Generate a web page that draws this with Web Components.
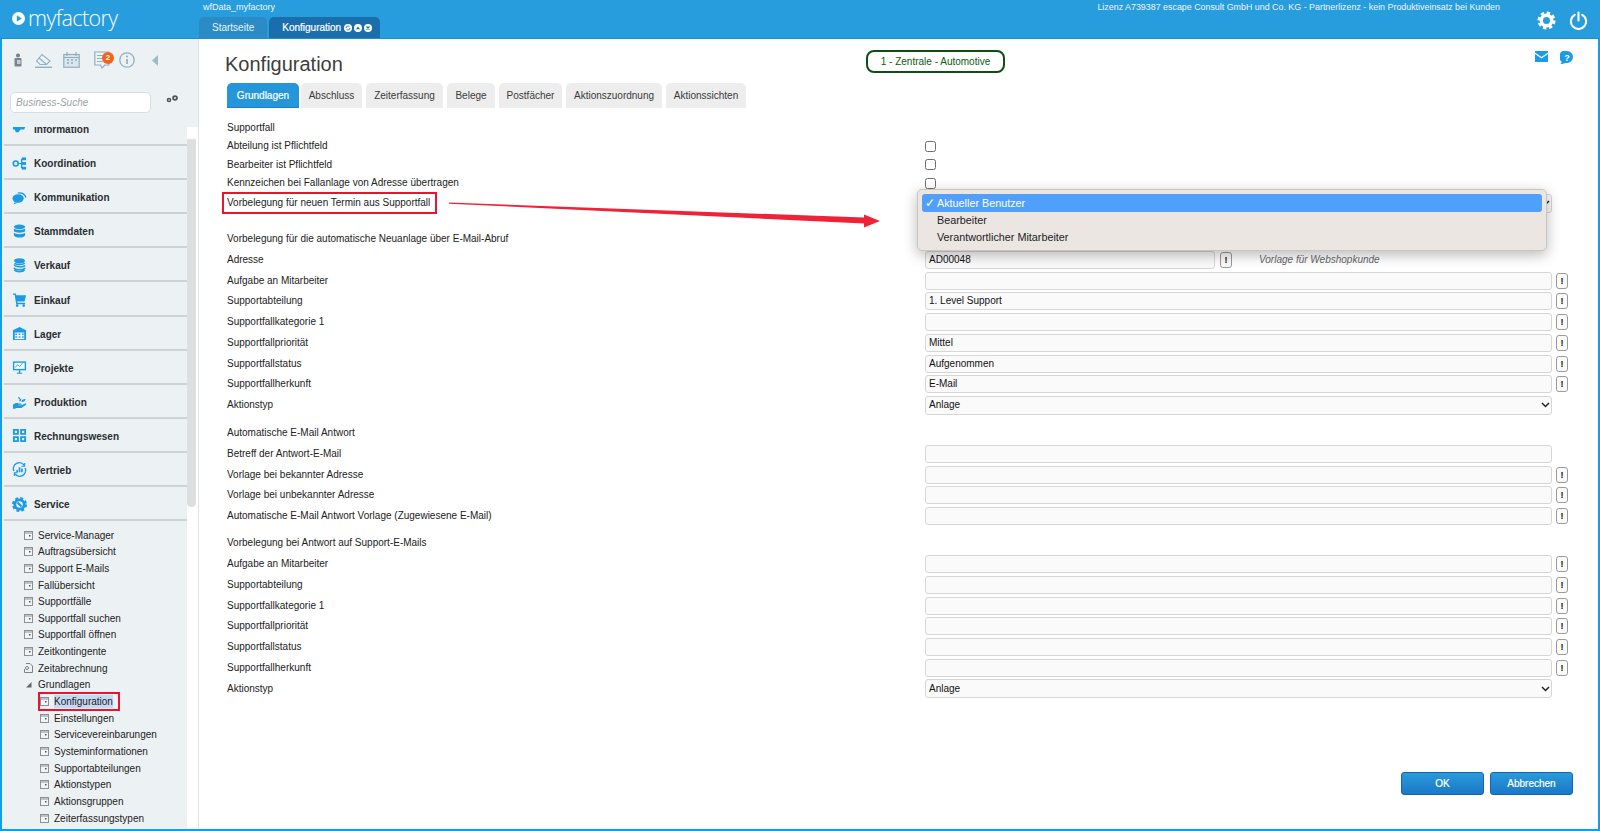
<!DOCTYPE html>
<html lang="de"><head><meta charset="utf-8"><title>myfactory</title>
<style>
html,body{margin:0;height:100%;overflow:hidden;background:#fff;font-family:"Liberation Sans",Arial,sans-serif;font-size:10px;color:#222}
</style></head><body>
<mf-app>
  <mf-topbar slot="top"></mf-topbar>
  <mf-sidebar slot="side">
    <mf-nav><svg slot="icon" viewBox="0 0 16 16"><path d="M1 3h5l2 2 2-2h5l-2 5H9l-2 3H4l-1-3H1z" fill="#1b9ae5"/></svg>Information</mf-nav>
    <mf-nav><svg slot="icon" viewBox="0 0 16 16" fill="#1b9ae5"><circle cx="4" cy="8" r="2.600" fill="none" stroke="#1b9ae5" stroke-width="1.700"/><path d="M6.500 7.400h3V3h1.500v10H9.500V8.600h-3z"/><rect x="10.500" y="1.500" width="4.500" height="3"/><rect x="10.500" y="6.500" width="4.500" height="3"/><rect x="10.500" y="11.500" width="4.500" height="3"/></svg>Koordination</mf-nav>
    <mf-nav><svg slot="icon" viewBox="0 0 16 16" fill="#1b9ae5"><ellipse cx="6.500" cy="9" rx="6" ry="4.500"/><path d="M3 13l-1.500 2.500L6 13.500z"/><path d="M6 2.800c4-1.300 8.500.5 9.500 5l-1.200.5c-1-3.500-4.500-5-8.300-4.500z"/></svg>Kommunikation</mf-nav>
    <mf-nav><svg slot="icon" viewBox="0 0 16 16" fill="#1b9ae5"><ellipse cx="8" cy="3" rx="6" ry="2.500"/><path d="M2 4.800c1.500 2 10.500 2 12 0v3c-1.500 2-10.500 2-12 0z"/><path d="M2 9.300c1.500 2 10.500 2 12 0v2.700c-1 3.300-11 3.300-12 0z"/></svg>Stammdaten</mf-nav>
    <mf-nav><svg slot="icon" viewBox="0 0 16 16" fill="none" stroke="#1b9ae5" stroke-width="1.600"><ellipse cx="8" cy="3" rx="5" ry="2" fill="#1b9ae5"/><path d="M3 5.500c1 2 9 2 10.500 0M2.500 7c0 2.500 9 3.500 11.500 1M2 10.500c1 2.500 10 3 12 0M2.500 12.500c2 2.800 9 2.800 11 0" /></svg>Verkauf</mf-nav>
    <mf-nav><svg slot="icon" viewBox="0 0 16 16" fill="#1b9ae5"><path d="M1 1.500h3l.6 2H15l-1.600 6.500H5.500l.4 1.500H14V13H4.500L2.800 3H1z"/><circle cx="5.500" cy="14.500" r="1.400"/><circle cx="12.500" cy="14.500" r="1.400"/></svg>Einkauf</mf-nav>
    <mf-nav><svg slot="icon" viewBox="0 0 16 16"><path d="M8 1L1 4.500V15h14V4.500z" fill="#1b9ae5"/><rect x="3" y="7" width="10" height="7" fill="#fff"/><g fill="#1b9ae5"><rect x="3.500" y="8" width="2" height="1.500"/><rect x="7" y="8" width="2" height="1.500"/><rect x="10.500" y="8" width="2" height="1.500"/><rect x="3.500" y="11" width="2" height="1.500"/><rect x="7" y="11" width="2" height="1.500"/><rect x="10.500" y="11" width="2" height="1.500"/></g></svg>Lager</mf-nav>
    <mf-nav><svg slot="icon" viewBox="0 0 16 16"><rect x="1" y="1.500" width="14" height="9.500" fill="#1b9ae5"/><rect x="2.500" y="3" width="11" height="6.500" fill="#fff"/><path d="M3.500 8l2.500-3 2 2 3-3.500" stroke="#1b9ae5" fill="none"/><path d="M7.200 11h1.600v2.500h2v1.200H5.200v-1.200h2z" fill="#1b9ae5"/></svg>Projekte</mf-nav>
    <mf-nav><svg slot="icon" viewBox="0 0 16 16" fill="#1b9ae5"><path d="M1 11.500c2-2 4-2.500 6-1.500h2.500c1.200 0 1.200 1.500 0 1.500H7v.5h3l4-2c1.200-.3 1.500 1 .6 1.600L10 14.800H5l-2 .8H1z"/><path d="M8 8c-.5-2 0-3 2-3.200 0 2-.5 3-2 3.200zM10 8.500c.3-2 1.500-3 4.500-3.500-.3 2.500-2 3.700-4.500 3.500zM6.500 3c1.300 0 2.200 1 2.200 2.500C7.300 5.500 6.500 4.500 6.500 3z"/></svg>Produktion</mf-nav>
    <mf-nav><svg slot="icon" viewBox="0 0 16 16"><path fill="#1b9ae5" fill-rule="evenodd" d="M1 1h6.300v6.300H1zM8.700 1H15v6.300H8.700zM1 8.700h6.300V15H1zM8.700 8.700H15V15H8.700zM3 3v2.300h2.300V3zM10.700 3v2.300H13V3zM3 10.700V13h2.300v-2.300zM10.700 10.700V13H13v-2.300z"/></svg>Rechnungswesen</mf-nav>
    <mf-nav><svg slot="icon" viewBox="0 0 16 16" fill="none" stroke="#1b9ae5" stroke-width="1.500"><path d="M2 9.500A6.300 6.300 0 0 1 13 3.500M14 6.500A6.300 6.300 0 0 1 3 12.500"/><path d="M5.500 11V8.500M8 11V5.500M10.500 11V7" stroke-width="1.800"/><path d="M13.500 1v3.500H10M2.500 15v-3.500H6" stroke-width="1.200"/></svg>Vertrieb</mf-nav>
    <mf-nav><svg slot="icon" viewBox="0 0 16 16" fill="none" stroke="#1b9ae5"><circle cx="8" cy="8" r="5" stroke-width="3"/><circle cx="8" cy="8" r="6.800" stroke-width="2.400" stroke-dasharray="3.050 2.290"/><path d="M5.800 5.800l4.400 4.400" stroke-width="2.200"/></svg>Service</mf-nav>
    <mf-tree slot="tree">
      <mf-leaf>Service-Manager</mf-leaf><mf-leaf>Auftragsübersicht</mf-leaf><mf-leaf>Support E-Mails</mf-leaf><mf-leaf>Fallübersicht</mf-leaf><mf-leaf>Supportfälle</mf-leaf><mf-leaf>Supportfall suchen</mf-leaf><mf-leaf>Supportfall öffnen</mf-leaf><mf-leaf>Zeitkontingente</mf-leaf><mf-leaf kind="doc">Zeitabrechnung</mf-leaf><mf-leaf kind="open">Grundlagen</mf-leaf>
      <mf-leaf sub marked>Konfiguration</mf-leaf><mf-leaf sub>Einstellungen</mf-leaf><mf-leaf sub>Servicevereinbarungen</mf-leaf><mf-leaf sub>Systeminformationen</mf-leaf><mf-leaf sub>Supportabteilungen</mf-leaf><mf-leaf sub>Aktionstypen</mf-leaf><mf-leaf sub>Aktionsgruppen</mf-leaf><mf-leaf sub>Zeiterfassungstypen</mf-leaf>
    </mf-tree>
  </mf-sidebar>
  <mf-main slot="main">
    <mf-titlebar>Konfiguration</mf-titlebar>
    <mf-tabs></mf-tabs>
    <mf-form>
      <mf-section style="--gap:.35px">
        <mf-row>Supportfall</mf-row>
        <mf-row check>Abteilung ist Pflichtfeld</mf-row>
        <mf-row check>Bearbeiter ist Pflichtfeld</mf-row>
        <mf-row check>Kennzeichen bei Fallanlage von Adresse übertragen</mf-row>
        <mf-row marked select popup>Vorbelegung für neuen Termin aus Supportfall</mf-row>
      </mf-section>
      <mf-section style="--mt:19.800px;--gap:2.750px">
        <mf-row>Vorbelegung für die automatische Neuanlage über E-Mail-Abruf</mf-row>
        <mf-row field short value="AD00048" btn hint="Vorlage für Webshopkunde">Adresse</mf-row>
        <mf-row field btn>Aufgabe an Mitarbeiter</mf-row>
        <mf-row field btn value="1. Level Support">Supportabteilung</mf-row>
        <mf-row field btn>Supportfallkategorie 1</mf-row>
        <mf-row field btn value="Mittel">Supportfallpriorität</mf-row>
        <mf-row field btn value="Aufgenommen">Supportfallstatus</mf-row>
        <mf-row field btn value="E-Mail">Supportfallherkunft</mf-row>
        <mf-row select value="Anlage">Aktionstyp</mf-row>
      </mf-section>
      <mf-section style="--mt:10.250px;--gap:2.600px">
        <mf-row>Automatische E-Mail Antwort</mf-row>
        <mf-row field>Betreff der Antwort-E-Mail</mf-row>
        <mf-row field btn>Vorlage bei bekannter Adresse</mf-row>
        <mf-row field btn>Vorlage bei unbekannter Adresse</mf-row>
        <mf-row field btn>Automatische E-Mail Antwort Vorlage (Zugewiesene E-Mail)</mf-row>
      </mf-section>
      <mf-section style="--mt:9.600px;--gap:2.750px">
        <mf-row>Vorbelegung bei Antwort auf Support-E-Mails</mf-row>
        <mf-row field btn>Aufgabe an Mitarbeiter</mf-row>
        <mf-row field btn>Supportabteilung</mf-row>
        <mf-row field btn>Supportfallkategorie 1</mf-row>
        <mf-row field btn>Supportfallpriorität</mf-row>
        <mf-row field btn>Supportfallstatus</mf-row>
        <mf-row field btn>Supportfallherkunft</mf-row>
        <mf-row select value="Anlage">Aktionstyp</mf-row>
      </mf-section>
    </mf-form>
    <mf-actions></mf-actions>
  </mf-main>
</mf-app>
<script>
const tpl=(css,html)=>`<style>${css}</style>${html}`;
const simple=(name,css,html)=>customElements.define(name,class extends HTMLElement{constructor(){super();this.attachShadow({mode:'open'}).innerHTML=tpl(css,html)}});

simple('mf-app',`
:host{display:flex;flex-direction:column;height:831px;width:1600px;position:relative;box-sizing:border-box;overflow:hidden}
.body{flex:1;display:flex;min-height:0;border:solid #129fe8;border-width:0 2px 2px 2px}
.arrow{position:absolute;left:0;top:0;width:1600px;height:831px;pointer-events:none}
`,`<slot name="top"></slot><div class="body"><slot name="side"></slot><slot name="main"></slot></div>
<svg class="arrow" viewBox="0 0 1600 831"><polygon points="449,202.500 864,217.500 864,214.500 880,221 864,227.500 864,223.500 449,203.700" fill="#ef2338"/></svg>`);

simple('mf-topbar',`
:host{display:flex;height:39px;box-sizing:border-box;background:#289ddd;border-bottom:1px solid #1092dc;color:#fff;font-family:"Liberation Sans",sans-serif;flex:none}
.logo{width:199px;display:flex;align-items:center;padding:0 0 2px 12px;box-sizing:border-box;gap:3px;flex:none}
.logo b{font:300 21.500px/26px "Open Sans",sans-serif;letter-spacing:-.6px}
.mid{width:600px;display:flex;flex-direction:column;padding-left:4px;box-sizing:border-box}
.app{font-size:9px;line-height:15px;height:17px;color:#eaf6fd}
.tabs{display:flex;gap:2px;margin-left:-4px}
.tab{height:21px;border-radius:5px 5px 0 0;background:#2a8bc6;display:flex;align-items:center;padding:0 13px;font-size:10px;color:#e9f5fc;box-sizing:border-box}
.tab.on{background:#1a6eab;color:#fff;-webkit-text-stroke:.2px #fff;padding:0 8px 0 13px;gap:2px}
.tab svg{width:8px;height:8px}
.right{flex:1;display:flex;flex-direction:column;align-items:flex-end}
.lic{font-size:8.900px;line-height:14px;padding-right:100px;color:#eaf6fd}
.ic{display:flex;gap:13px;padding-right:12px;align-items:center;margin-top:-3px}
.ic svg{width:19px;height:19px}
`,`<div class="logo"><svg width="13" height="13" viewBox="0 0 13 13"><circle cx="6.500" cy="6.500" r="6.500" fill="#fff"/><path d="M4.800 3.300l5 3.200-5 3.200z" fill="#289ddd"/></svg><b>myfactory</b></div>
<div class="mid"><div class="app">wfData_myfactory</div><div class="tabs"><div class="tab">Startseite</div><div class="tab on">Konfiguration
<svg viewBox="0 0 8 8" style="margin-left:1px"><circle cx="4" cy="4" r="4" fill="#fff"/><path d="M2 4a2 2 0 0 1 3.500-1.300M6 4a2 2 0 0 1-3.500 1.300" stroke="#1a6eab" fill="none"/></svg>
<svg viewBox="0 0 8 8"><circle cx="4" cy="4" r="4" fill="#fff"/><path d="M2 5.300L4 2.500l2 2.800z" fill="#1a6eab"/></svg>
<svg viewBox="0 0 8 8"><circle cx="4" cy="4" r="4" fill="#fff"/><path d="M2.500 2.500l3 3m0-3l-3 3" stroke="#1a6eab" stroke-width="1.200"/></svg></div></div></div>
<div class="right"><div class="lic">Lizenz A739387 escape Consult GmbH und Co. KG - Partnerlizenz - kein Produktiveinsatz bei Kunden</div>
<div class="ic"><svg viewBox="0 0 20 20" fill="none" stroke="#fff"><circle cx="10" cy="10" r="5.500" stroke-width="3.600"/><circle cx="10" cy="10" r="8" stroke-width="3" stroke-dasharray="3.560 2.720"/></svg>
<svg viewBox="0 0 20 20" fill="none" stroke="#fff" stroke-width="2.200" stroke-linecap="round"><path d="M10 1.500V10"/><path d="M6 4A8 8 0 1 0 14 4"/></svg></div></div>`);

customElements.define('mf-sidebar',class extends HTMLElement{constructor(){super();this.attachShadow({mode:'open'}).innerHTML=tpl(`
:host{display:flex;flex-direction:column;width:196px;flex:none;background:#ecf1f4;border-right:1px solid #dfe3e6;box-sizing:content-box;font-family:"Liberation Sans",sans-serif}
.tools{height:42px;display:flex;align-items:center;flex:none;position:relative}
.tools svg{display:block;flex:none}
.search{height:46px;flex:none;display:flex;align-items:flex-start;padding:11px 0 0 8px;gap:15px;box-sizing:border-box}
.box{width:141px;height:21px;box-sizing:border-box;border:1px solid #d8dde0;border-radius:5px;background:#fff;font:italic 10px/19px "Liberation Sans",sans-serif;color:#9a9fa3;padding-left:5px}
.search svg{margin-top:3px}
.scroll{flex:1;display:flex;min-height:0;overflow:hidden}
.list{width:185px;margin-top:-15px;flex:none}
.bar{flex:1;background:#fff;padding:3px 2px 0 0}
.thumb{height:377px;border-radius:0 0 5px 5px;background:linear-gradient(#fff 0,#fff 8px,#dcdedf 10px,#dcdedf 100%)}
.badge{position:absolute;left:100px;top:13px;width:12px;height:12px;border-radius:50%;background:#f2641c;color:#fff;font:bold 8px/12px "Liberation Sans",sans-serif;text-align:center}
`,`<div class="tools">
<svg style="margin-left:11px" width="10" height="14" viewBox="0 0 10 14"><circle cx="5" cy="2.500" r="2" fill="#6f7f88"/><rect x="1.500" y="5" width="7" height="8.500" rx="1" fill="#77868e"/><rect x="4" y="7" width="3.500" height="4" fill="#c3ced4"/></svg>
<svg style="margin-left:12px" width="17" height="16" viewBox="0 0 17 16" fill="none" stroke="#8fb0bf" stroke-width="1.100"><path d="M1.500 9L7 2.500l8 6.500-3.500 3.500H5z"/><path d="M4 6l7 6"/><path d="M0 15.300h17" stroke-width="1.400"/></svg>
<svg style="margin-left:11px" width="17" height="16" viewBox="0 0 17 16" fill="none" stroke="#8fb0bf" stroke-width="1.200"><rect x=".8" y="2.500" width="15.400" height="12.800" fill="#dbe6ec"/><path d="M4 0v4M13 0v4M.8 5.500h15.400"/><path d="M4 8h2M8 8h2M12 8h2M4 11h2M8 11h2" stroke-width="1.600" /></svg>
<svg style="margin-left:14px" width="16" height="18" viewBox="0 0 16 18" fill="none" stroke="#8fb0bf" stroke-width="1.200"><path d="M.8 1h14v13h-4L8 17l-1.500-3H.8z"/><path d="M3 4.500h9M3 7.500h9M3 10.500h6"/></svg>
<span class="badge">2</span>
<svg style="margin-left:9px" width="16" height="16" viewBox="0 0 16 16" fill="none" stroke="#8fb0bf" stroke-width="1.300"><circle cx="8" cy="8" r="7.200"/><path d="M8 7v5" stroke-width="1.700"/><circle cx="8" cy="4.500" r="1" fill="#8fb0bf" stroke="none"/></svg>
<svg style="margin-left:17px" width="6" height="11" viewBox="0 0 6 11"><path d="M6 0v11L0 5.500z" fill="#9fbac7"/></svg>
</div>
<div class="search"><div class="box">Business-Suche</div>
<svg width="12" height="8" viewBox="0 0 12 8"><circle cx="3" cy="5" r="2.300" fill="#4d5559"/><circle cx="9" cy="3" r="2.800" fill="#4d5559"/><circle cx="9" cy="3" r="1" fill="#ecf1f4"/><circle cx="3" cy="5" r=".8" fill="#ecf1f4"/></svg></div>
<div class="scroll"><div class="list"><slot></slot><slot name="tree"></slot></div><div class="bar"><div class="thumb"></div></div></div>`)}});

simple('mf-nav',`
:host{display:flex;align-items:center;height:34.100px;box-sizing:border-box;margin-left:2px;border-bottom:2px solid #cdd2d6;padding:4px 0 0 8px;gap:7px;font:bold 10px/14px "Liberation Sans",sans-serif;color:#2a2d30}
::slotted(svg){width:15px;height:15px;flex:none;margin-top:-2px}
`,`<slot name="icon"></slot><slot></slot>`);

simple('mf-tree',`:host{display:block;padding-top:5.600px}`,`<slot></slot>`);

customElements.define('mf-leaf',class extends HTMLElement{constructor(){super();const k=this.getAttribute('kind');
let ic=`<svg width="9" height="9" viewBox="0 0 9 9"><rect x=".5" y=".5" width="8" height="8" fill="#f3f4f5" stroke="#8b9094"/><path d="M.5 2h8" stroke="#8b9094"/><rect x="5" y="4" width="1.500" height="1.500" fill="#555"/></svg>`;
if(k==='doc')ic=`<svg width="9" height="10" viewBox="0 0 9 10" fill="none" stroke="#7d8387"><path d="M2 .5h4l2.500 2.500v6.500H.5V6"/><circle cx="3" cy="5" r="1.500"/></svg>`;
if(k==='open')ic=`<svg width="9" height="9" viewBox="0 0 9 9"><path d="M7.500 2v5.500H2z" fill="#666"/></svg>`;
this.attachShadow({mode:'open'}).innerHTML=tpl(`
:host{display:flex;align-items:center;height:16.670px;padding-left:22px;font:10px/13px "Liberation Sans",sans-serif;color:#222;white-space:nowrap}
:host([sub]){padding-left:38px}
.in{display:flex;align-items:center;gap:5px}
:host([marked]) .in{border:2px solid #ec1330;padding:0 3px 0 0;height:19px;box-sizing:border-box;margin-left:-2px;width:82px;flex:none}
:host([marked]) .t{background:#c4daf3}
`,`<div class="in">${ic}<span class="t"><slot></slot></span></div>`)}});

customElements.define('mf-main',class extends HTMLElement{constructor(){super();this.attachShadow({mode:'open'}).innerHTML=tpl(`
:host{flex:1;display:flex;flex-direction:column;min-width:0;padding:0 25px 34px 28px;box-sizing:border-box;background:#fff}
`,`<slot></slot>`)}});

simple('mf-titlebar',`
:host{display:flex;height:44px;align-items:flex-start;flex:none}
h1{margin:11px 0 0 -2px;width:641px;font:400 20px/28px "Liberation Sans",sans-serif;color:#3d3d3d;flex:none}
.pill{margin-top:11px;width:139px;height:23px;box-sizing:border-box;border:2px solid #0d4f12;border-radius:8px;display:flex;align-items:center;justify-content:center;font:10px/12px "Liberation Sans",sans-serif;color:#0c5a14;padding-top:1px}
.ic{margin-left:auto;display:flex;gap:12px;margin-top:12px}
`,`<h1><slot></slot></h1><div class="pill">1 - Zentrale - Automotive</div>
<div class="ic"><svg width="13" height="11" viewBox="0 0 13 11"><path d="M0 0h13v1.500L6.500 6 0 1.500z" fill="#1b9ae5"/><path d="M0 3l6.500 4.500L13 3v8H0z" fill="#1b9ae5"/></svg>
<svg width="13" height="13" viewBox="0 0 13 13"><path d="M7 0a6 6 0 0 1 0 12c-1.500 0-3 0-4.500 1L0 12.500c1.500-.3 1.500-1 1.500-2A6 6 0 0 1 7 0z" fill="#1b9ae5"/><text x="7" y="9.500" text-anchor="middle" font-size="9" font-weight="700" fill="#fff" font-family="Liberation Sans">?</text></svg></div>`);

simple('mf-tabs',`
:host{display:flex;gap:4px;height:25px;flex:none;font:10px/25px "Liberation Sans",sans-serif}
.t{background:#ededed;border-radius:5px 5px 0 0;color:#3a3a3a;box-sizing:border-box;text-align:center}
.on{background:#2596da;color:#fff;border-bottom:1px solid #1a82c4;-webkit-text-stroke:.2px #fff;width:72px;margin-right:-2px}
`,`<div class="t on">Grundlagen</div><div class="t" style="width:61px">Abschluss</div><div class="t" style="width:77px">Zeiterfassung</div><div class="t" style="width:48px">Belege</div><div class="t" style="width:63px">Postfächer</div><div class="t" style="width:96px">Aktionszuordnung</div><div class="t" style="width:80px">Aktionssichten</div>`);

simple('mf-form',`:host{display:flex;flex-direction:column;padding-top:11px;flex:none}`,`<slot></slot>`);
simple('mf-section',`:host{display:flex;flex-direction:column;margin-top:var(--mt,0);gap:var(--gap,.6px)}`,`<slot></slot>`);

customElements.define('mf-row',class extends HTMLElement{constructor(){super();
const a=n=>this.hasAttribute(n),v=this.getAttribute('value')||'',hint=this.getAttribute('hint');
let r='';
const b=`<span class="btn">!</span>`;
if(a('check'))r=`<span class="cb"></span>`;
if(a('field'))r=`<div class="f ${a('short')?'short':''}">${v}</div>${a('btn')?b:''}${hint?`<i>${hint}</i>`:''}`;
if(a('select'))r=`<div class="f sel"><span>${v}</span><svg width="9" height="6" viewBox="0 0 9 6"><path d="M1 1l3.500 3.500L8 1" fill="none" stroke="#222" stroke-width="1.500"/></svg></div>`;
if(a('popup'))r+=`<div class="pop"><div class="o on"><span>✓</span>Aktueller Benutzer</div><div class="o">Bearbeiter</div><div class="o">Verantwortlicher Mitarbeiter</div></div>`;
this.attachShadow({mode:'open'}).innerHTML=tpl(`
:host{display:grid;grid-template-columns:698px 1fr;height:18px;align-items:center;font:10px/18px "Liberation Sans",sans-serif;color:#222}
.l{white-space:nowrap;justify-self:start}
:host([marked]) .l{border:2px solid #ec1330;box-sizing:border-box;height:22px;line-height:18px;margin-left:-5px;padding:0 3px;width:215px;white-space:nowrap;overflow:hidden}
.r{display:flex;align-items:center;position:relative;height:18px}
.cb{width:11px;height:11px;box-sizing:border-box;border:1px solid #6d6d6d;border-radius:2.500px;background:#fff}
.f{flex:none;width:627px;height:18px;box-sizing:border-box;border:1px solid #d6d6d6;border-radius:3px;background:#fafafa;padding:0 3px;line-height:16px;color:#111;display:flex;justify-content:space-between;align-items:center}
.f.short{width:290px}
.f.sel{height:19px;padding-right:1px}
.btn{flex:none;width:12px;height:16px;box-sizing:border-box;margin-left:4px;border:1px solid #9a9a9a;border-radius:3px;background:#fbfbfb;font:bold 9px/14px "Liberation Sans",sans-serif;text-align:center;color:#111}
.short + .btn{margin-left:5px}
i{margin-left:27px;color:#666;font-size:10px}
.pop{position:absolute;left:-8px;top:-5px;width:630px;height:62px;box-sizing:border-box;z-index:5;background:#ebe6e2;border:1px solid #c9c6c2;border-radius:5px;box-shadow:0 4px 14px rgba(0,0,0,.28);padding:4px;font:10.800px/17px "Liberation Sans",sans-serif;color:#222}
.o{height:17px;padding-left:15px;position:relative}
.on{background:#4f9ffb;color:#fff;height:18px;line-height:18px;border-radius:3px}
.on span{position:absolute;left:3px;top:0;font-size:12px}
`,`<div class="l"><slot></slot></div><div class="r">${r}</div>`)}});

simple('mf-actions',`
:host{display:flex;justify-content:flex-end;gap:6px;margin-top:auto;flex:none}
.b{width:83px;height:23px;box-sizing:border-box;border:1px solid #0f66b4;border-radius:3px;background:linear-gradient(#2a9adb,#1b78c7);color:#fff;font:10px/21px "Liberation Sans",sans-serif;-webkit-text-stroke:.2px #fff;text-align:center}
`,`<div class="b">OK</div><div class="b">Abbrechen</div>`);
</script>
</body></html>
